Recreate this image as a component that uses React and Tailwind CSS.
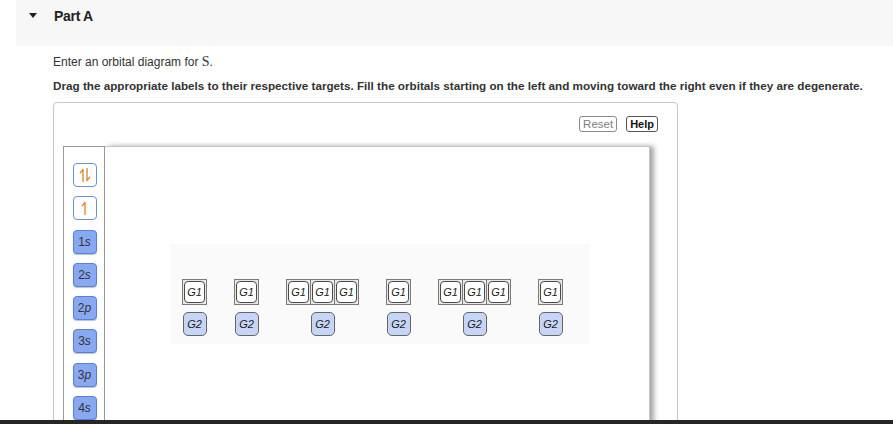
import React from "react";

const F = { fontFamily: '"Liberation Sans", Arial, sans-serif' };

function Harpoons({ double }) {
  return (
    <svg width="14" height="16" viewBox="0 0 14 16" fill="none">
      {double ? (
        <>
          <path d="M5 14.5V2.5M5 2.5L2.2 5.8" stroke="#d9822b" strokeWidth="1.3" strokeLinecap="round" />
          <path d="M9 1.5V13.5M9 13.5L11.8 10.2" stroke="#d9822b" strokeWidth="1.3" strokeLinecap="round" />
        </>
      ) : (
        <path d="M7 14.5V2.5M7 2.5L4.2 5.8" stroke="#d9822b" strokeWidth="1.3" strokeLinecap="round" />
      )}
    </svg>
  );
}

function ToolBtn({ children, label }) {
  return (
    <div
      className={
        "w-[24px] h-[24px] rounded-[4px] border flex items-center justify-center text-[12px] text-[#333] " +
        (label
          ? "bg-[#88a9f1] border-[#5a7fd7] shadow-[0_1px_1px_rgba(0,0,0,0.25)]"
          : "bg-white border-[#6b90dd]")
      }
    >
      {children}
    </div>
  );
}

function Lbl({ n, l }) {
  return (
    <span>
      {n}
      <i>{l}</i>
    </span>
  );
}

function Slot() {
  return (
    <div className="w-[25px] h-[26px] border border-[#7a7a7a] bg-[#e9e9e9] p-[1px] -ml-[1px] first:ml-0">
      <div className="w-full h-full rounded-[4px] border border-[#4a4a4a] bg-white flex items-center justify-center text-[11px] italic text-[#222]">
        G1
      </div>
    </div>
  );
}

function Group({ n }) {
  return (
    <div className="flex flex-col items-center">
      <div className="flex">
        {Array.from({ length: n }).map((_, i) => (
          <Slot key={i} />
        ))}
      </div>
      <div className="mt-[7px] w-[24px] h-[24px] rounded-[5px] border border-[#666] bg-[#c6d5f6] flex items-center justify-center text-[11px] italic text-[#222]">
        G2
      </div>
    </div>
  );
}

export default function App() {
  return (
    <div className="relative w-[893px] h-[424px] overflow-hidden bg-white" style={F}>
      <div className="ml-[16px] h-[46px] bg-[#f7f7f7] flex items-start pt-[8px]">
        <div className="ml-[13px] mt-[5px] w-0 h-0 border-l-[4.5px] border-r-[4.5px] border-t-[5px] border-l-transparent border-r-transparent border-t-[#222]" />
        <div className="ml-[17px] text-[14px] font-bold text-[#222] tracking-[-0.3px] leading-[16px]">Part A</div>
      </div>

      <div className="pl-[53px]">
        <p className="mt-[9px] text-[12px] leading-[14px] text-[#333]">
          Enter an orbital diagram for{" "}
          <span className="text-[14px]" style={{ fontFamily: '"Liberation Serif", serif' }}>S</span>.
        </p>
        <p className="mt-[10px] text-[11.7px] leading-[14px] font-bold text-[#333] whitespace-nowrap">
          Drag the appropriate labels to their respective targets. Fill the orbitals starting on the left and moving toward the right even if they are degenerate.
        </p>

        <div className="mt-[9px] w-[625px] h-[400px] border border-[#c8c8c8] rounded-t-[4px]">
          <div className="flex justify-end gap-[9px] pr-[19px] pt-[13px]">
            <div className="h-[16px] px-[3px] rounded-[3px] border border-[#8a8a8a] text-[11.5px] leading-[14px] text-[#808080]">Reset</div>
            <div className="h-[16px] px-[3px] rounded-[3px] border border-[#555] text-[11px] leading-[14px] font-bold text-[#111]">Help</div>
          </div>

          <div className="ml-[9px] mt-[14px] flex w-[593px]">
            <div className="w-[42px] h-[300px] border-l border-r border-t border-[#9a9a9a] flex flex-col items-center gap-[9.3px] pt-[16px] pl-[1px]">
              <ToolBtn><Harpoons double /></ToolBtn>
              <ToolBtn><Harpoons /></ToolBtn>
              <ToolBtn label><Lbl n="1" l="s" /></ToolBtn>
              <ToolBtn label><Lbl n="2" l="s" /></ToolBtn>
              <ToolBtn label><Lbl n="2" l="p" /></ToolBtn>
              <ToolBtn label><Lbl n="3" l="s" /></ToolBtn>
              <ToolBtn label><Lbl n="3" l="p" /></ToolBtn>
              <ToolBtn label><Lbl n="4" l="s" /></ToolBtn>
            </div>
            <div className="w-[545px] h-[300px] border-t border-r border-[#c4c4c4] shadow-[4px_0_5px_rgba(0,0,0,0.35)] bg-white pl-[65px] pt-[97px]">
              <div className="w-[420px] h-[100px] bg-[#fafafa] pl-[12px] pt-[35px] flex items-start gap-[27px]">
                <Group n={1} />
                <Group n={1} />
                <Group n={3} />
                <Group n={1} />
                <Group n={3} />
                <Group n={1} />
              </div>
            </div>
          </div>
        </div>
      </div>

      <div className="absolute left-0 bottom-0 w-full h-[4px] bg-[#262626]" />
    </div>
  );
}
